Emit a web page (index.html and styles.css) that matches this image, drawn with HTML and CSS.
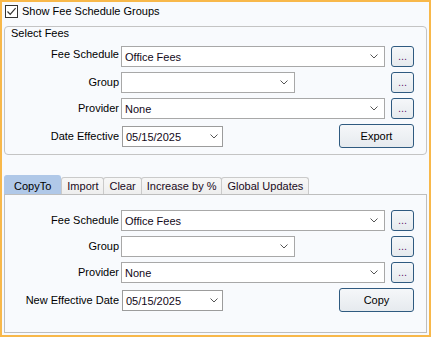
FILE: index.html
```html
<!DOCTYPE html>
<html>
<head>
<meta charset="utf-8">
<link rel="stylesheet" href="styles.css">
</head>
<body>
<div class="window">
  <label class="show-groups">
    <span class="checkbox"><svg width="11" height="11" viewBox="0 0 11 11"><path d="M1.5 5.5 L4.2 8.3 L9.6 2.2" fill="none" stroke="#333" stroke-width="1.2"/></svg></span>
    Show Fee Schedule Groups
  </label>

  <section class="group">
    <div class="group-title">Select Fees</div>
    <div class="form">
      <div class="row">
        <span class="lbl lbl-top">Fee Schedule</span>
        <div class="combo wide"><span class="val">Office Fees</span><svg class="chev" width="8" height="5" viewBox="0 0 8 5"><path d="M0.5 0.5 L4 4 L7.5 0.5" fill="none" stroke="#555"/></svg></div>
        <button class="btn dots">...</button>
      </div>
      <div class="row">
        <span class="lbl">Group</span>
        <div class="combo narrow"><span class="val"></span><svg class="chev" width="8" height="5" viewBox="0 0 8 5"><path d="M0.5 0.5 L4 4 L7.5 0.5" fill="none" stroke="#555"/></svg></div>
        <button class="btn dots push">...</button>
      </div>
      <div class="row">
        <span class="lbl">Provider</span>
        <div class="combo wide"><span class="val">None</span><svg class="chev" width="8" height="5" viewBox="0 0 8 5"><path d="M0.5 0.5 L4 4 L7.5 0.5" fill="none" stroke="#555"/></svg></div>
        <button class="btn dots">...</button>
      </div>
      <div class="row row-last">
        <span class="lbl">Date Effective</span>
        <div class="combo date"><span class="val">05/15/2025</span><svg class="chev" width="8" height="5" viewBox="0 0 8 5"><path d="M0.5 0.5 L4 4 L7.5 0.5" fill="none" stroke="#555"/></svg></div>
        <button class="btn action push">Export</button>
      </div>
    </div>
  </section>

  <div class="tabs">
    <div class="tab-strip">
      <span class="tab active">CopyTo</span>
      <span class="tab">Import</span>
      <span class="tab">Clear</span>
      <span class="tab">Increase by %</span>
      <span class="tab">Global Updates</span>
    </div>
    <div class="tab-panel">
      <div class="row">
        <span class="lbl">Fee Schedule</span>
        <div class="combo wide"><span class="val">Office Fees</span><svg class="chev" width="8" height="5" viewBox="0 0 8 5"><path d="M0.5 0.5 L4 4 L7.5 0.5" fill="none" stroke="#555"/></svg></div>
        <button class="btn dots">...</button>
      </div>
      <div class="row">
        <span class="lbl">Group</span>
        <div class="combo narrow"><span class="val"></span><svg class="chev" width="8" height="5" viewBox="0 0 8 5"><path d="M0.5 0.5 L4 4 L7.5 0.5" fill="none" stroke="#555"/></svg></div>
        <button class="btn dots push">...</button>
      </div>
      <div class="row">
        <span class="lbl">Provider</span>
        <div class="combo wide"><span class="val">None</span><svg class="chev" width="8" height="5" viewBox="0 0 8 5"><path d="M0.5 0.5 L4 4 L7.5 0.5" fill="none" stroke="#555"/></svg></div>
        <button class="btn dots">...</button>
      </div>
      <div class="row row-last">
        <span class="lbl">New Effective Date</span>
        <div class="combo date"><span class="val">05/15/2025</span><svg class="chev" width="8" height="5" viewBox="0 0 8 5"><path d="M0.5 0.5 L4 4 L7.5 0.5" fill="none" stroke="#555"/></svg></div>
        <button class="btn action push">Copy</button>
      </div>
    </div>
  </div>
</div>
</body>
</html>
```

FILE: styles.css
```css
* { box-sizing: border-box; }

body {
  margin: 0;
  font-family: "Liberation Sans", Arial, sans-serif;
  font-size: 11px;
  line-height: 13px;
  color: #000;
}

.window {
  width: 431px;
  height: 337px;
  border: 2px solid #F8B84A;
  background: #F8FAFD;
  display: flex;
  flex-direction: column;
  padding: 0 2px;
}

.show-groups {
  height: 19px;
  display: flex;
  align-items: center;
  gap: 4px;
  padding-left: 1px;
  color: #000;
}

.checkbox {
  width: 13px;
  height: 13px;
  border: 1px solid #333;
  background: #fff;
  display: flex;
  align-items: center;
  justify-content: center;
}

.checkbox svg { display: block; }

.group {
  margin-top: 5px;
  border: 1px solid #C4C4C4;
  border-radius: 4px;
  padding-bottom: 6px;
}

.group-title {
  padding-left: 6px;
  height: 13px;
}

.form {
  margin-top: 6px;
  display: flex;
  flex-direction: column;
  gap: 5px;
}

.row {
  display: flex;
  align-items: center;
  height: 21px;
  padding-right: 12px;
}

.row-last { height: 24px; }

.lbl {
  width: 114px;
  text-align: right;
  margin-right: 2px;
  white-space: nowrap;
}

.lbl-top {
  align-self: flex-start;
  padding-top: 2px;
}

.combo {
  height: 21px;
  border: 1px solid #A8A8A8;
  background: #fff;
  display: flex;
  align-items: center;
  justify-content: space-between;
  padding: 0 6px 0 3px;
}

.combo .val {
  padding-top: 2px;
  white-space: nowrap;
  color: #120818;
}

.combo.wide { width: 264px; }
.combo.narrow { width: 174px; }
.combo.date {
  width: 101px;
  margin-left: 1px;
  padding-right: 4px;
  border-color: #9C9C9C;
}

.chev { display: block; }

.btn {
  font: inherit;
  color: #000;
  border: 1px solid #2F5A80;
  border-radius: 3px;
  background: linear-gradient(#F5F7F9, #E6EAEE);
  padding: 0;
  margin: 0;
}

.dots {
  width: 23px;
  height: 21px;
  margin-left: 6px;
  color: #6A1A72;
  line-height: 13px;
}

.push { margin-left: auto; }

.action {
  width: 75px;
  height: 24px;
}

.tabs {
  margin-top: 20px;
  display: flex;
  flex-direction: column;
}

.tab-strip {
  display: flex;
  align-items: flex-end;
  height: 19px;
}

.tab {
  height: 17px;
  padding: 2px 5px 0;
  border: 1px solid #CACACA;
  border-bottom: none;
  border-radius: 3px 3px 0 0;
  background: linear-gradient(#F7F7F7, #EEEEEE);
  margin-left: -1px;
  white-space: nowrap;
  color: #1A0A22;
}

.tab.active {
  height: 19px;
  padding: 4px 9px 0;
  margin-left: 0;
  background: #B0C8E8;
  border-color: #B0C8E8;
  color: #000;
}

.tab.active + .tab { margin-left: 0; }

.tab-panel {
  border: 1px solid #BEBEBE;
  padding: 15px 0 20px;
  display: flex;
  flex-direction: column;
  gap: 5px;
}
```
